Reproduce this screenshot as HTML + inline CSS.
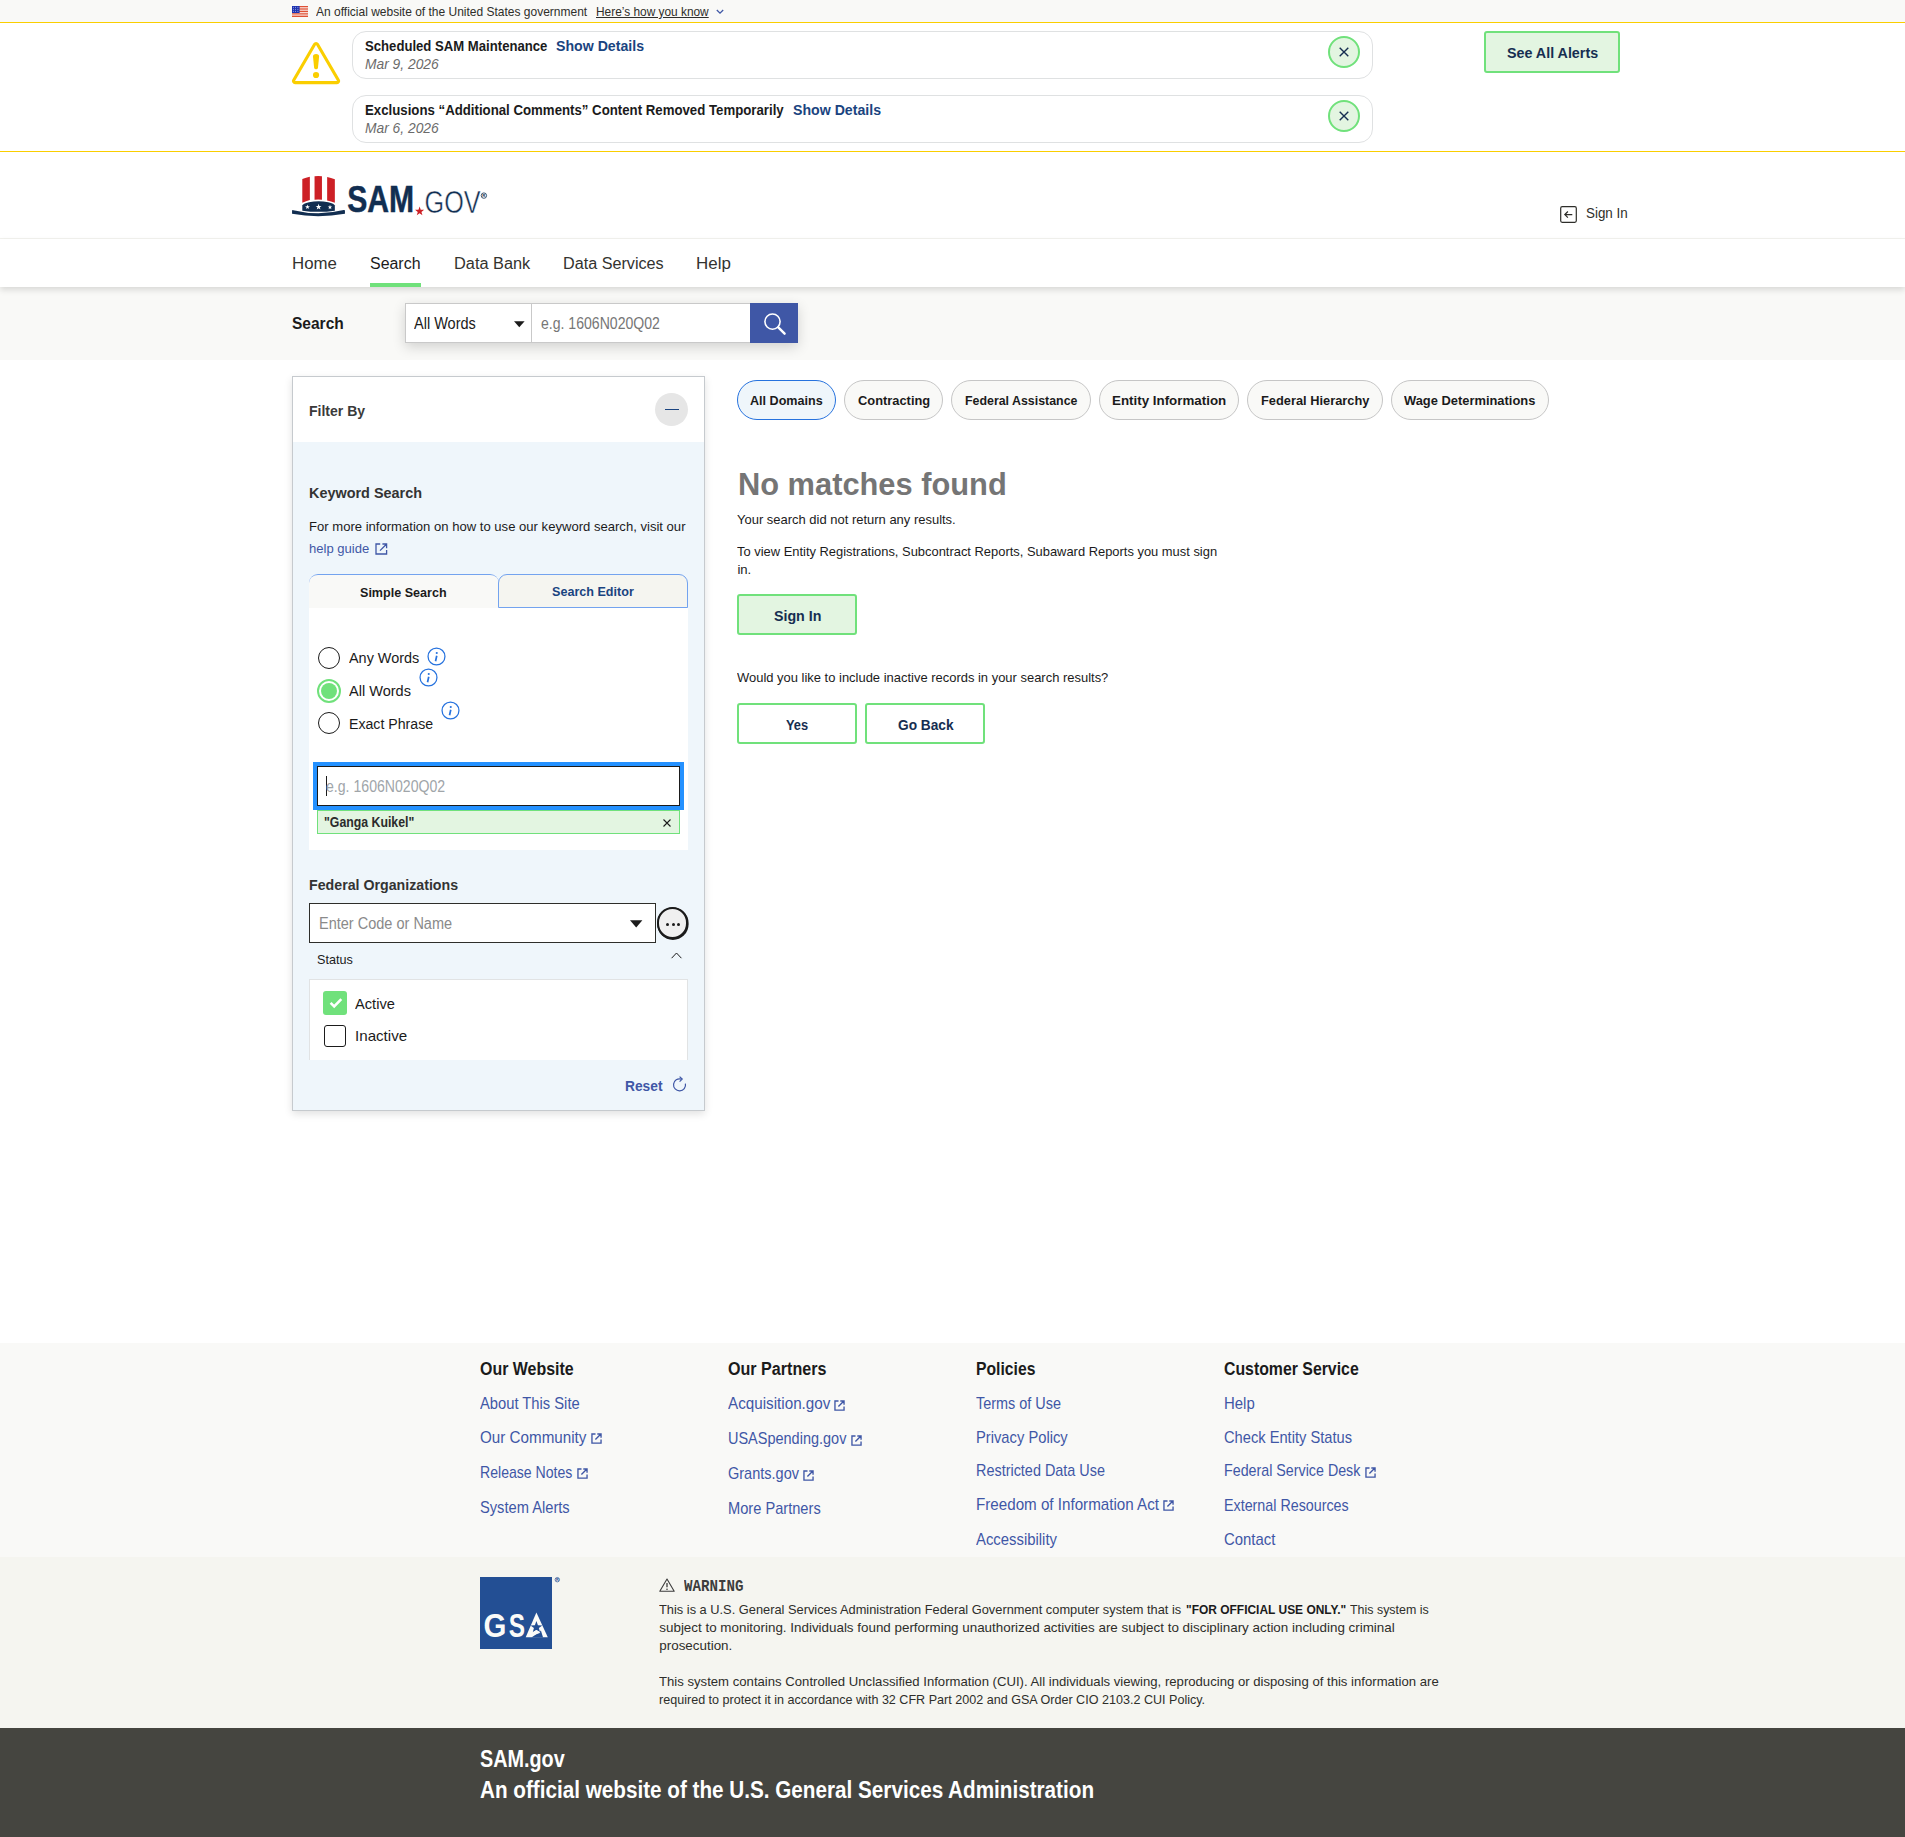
<!DOCTYPE html>
<html lang="en">
<head>
<meta charset="utf-8">
<title>SAM.gov | Search</title>
<style>
html,body{margin:0;padding:0;background:#fff;}
body{width:1905px;height:1837px;position:relative;overflow:hidden;font-family:"Liberation Sans",sans-serif;color:#1b1b1b;}
.a{position:absolute;box-sizing:border-box;}
.t{position:absolute;white-space:pre;line-height:1;transform-origin:0 0;}
svg{position:absolute;overflow:visible;}
.card{border:1px solid #dfe1e2;border-radius:14px;background:#fff;}
.xbtn{width:32px;height:32px;border-radius:50%;background:#e3f5e1;border:2px solid #70e17b;}
.gbtn{border:2px solid #70e17b;border-radius:3px;}
.pill{height:40px;top:380px;border-radius:20px;background:#f9f9f7;border:1px solid #c6c6c6;}
</style>
</head>
<body>
<!-- ===== gov banner ===== -->
<div class="a" style="left:0;top:0;width:1905px;height:22px;background:#f9f9f7;"></div>
<svg style="left:292px;top:6px" width="16" height="11" viewBox="0 0 16 11">
  <rect width="16" height="11" fill="#fff"/>
  <g fill="#db3e1f"><rect y="0" width="16" height="0.9"/><rect y="1.7" width="16" height="0.9"/><rect y="3.4" width="16" height="0.9"/><rect y="5.1" width="16" height="0.9"/><rect y="6.8" width="16" height="0.9"/><rect y="8.5" width="16" height="0.9"/><rect y="10.1" width="16" height="0.9"/></g>
  <rect width="7.6" height="7" fill="#1e33b1"/><circle cx="1.3" cy="1.2" r="0.45" fill="#fff"/><circle cx="3.6" cy="1.2" r="0.45" fill="#fff"/><circle cx="5.9" cy="1.2" r="0.45" fill="#fff"/><circle cx="1.3" cy="3.2" r="0.45" fill="#fff"/><circle cx="3.6" cy="3.2" r="0.45" fill="#fff"/><circle cx="5.9" cy="3.2" r="0.45" fill="#fff"/><circle cx="1.3" cy="5.2" r="0.45" fill="#fff"/><circle cx="3.6" cy="5.2" r="0.45" fill="#fff"/><circle cx="5.9" cy="5.2" r="0.45" fill="#fff"/>
</svg>
<svg style="left:716px;top:9px" width="8" height="6" viewBox="0 0 8 6"><path d="M0.8 1 L4 4.2 L7.2 1" fill="none" stroke="#3f57a6" stroke-width="1.3"/></svg>

<!-- ===== alerts ===== -->
<div class="a" style="left:0;top:22px;width:1905px;height:1px;background:#face00;"></div>
<div class="a" style="left:0;top:151px;width:1905px;height:1px;background:#face00;"></div>
<svg style="left:292px;top:41px" width="48" height="44" viewBox="0 0 48 44">
  <path d="M22.66 3.27 A1.6 1.6 0 0 1 25.42 3.27 L46.40 39.24 A1.6 1.6 0 0 1 45.01 41.65 L3.07 41.65 A1.6 1.6 0 0 1 1.68 39.24 Z" fill="none" stroke="#face00" stroke-width="3.1"/>
  <path d="M21 15.8 Q20.9 13 24.04 13 Q27.2 13 27.1 15.8 L26 26.4 Q25.8 28.3 24.04 28.3 Q22.3 28.3 22.1 26.4 Z" fill="#face00"/>
  <circle cx="24.04" cy="34" r="3.1" fill="#face00"/>
</svg>
<div class="a card" style="left:352px;top:31px;width:1021px;height:48px;"></div>
<div class="a card" style="left:352px;top:95px;width:1021px;height:48px;"></div>
<div class="a xbtn" style="left:1328px;top:36px;"></div>
<div class="a xbtn" style="left:1328px;top:100px;"></div>
<svg style="left:1339px;top:47px" width="10" height="10" viewBox="0 0 10 10"><path d="M0.7 0.7 L9.3 9.3 M9.3 0.7 L0.7 9.3" stroke="#162e51" stroke-width="1.4"/></svg>
<svg style="left:1339px;top:111px" width="10" height="10" viewBox="0 0 10 10"><path d="M0.7 0.7 L9.3 9.3 M9.3 0.7 L0.7 9.3" stroke="#162e51" stroke-width="1.4"/></svg>
<div class="a gbtn" style="left:1484px;top:31px;width:136px;height:42px;background:#e3f5e1;"></div>

<!-- ===== header ===== -->
<svg style="left:292px;top:176px" width="196" height="42" viewBox="0 0 196 42">
  <path d="M10.3 3.05 Q14 1.5 17.85 0.85 L17.85 23.9 Q14 24.9 10.3 26.75 Z" fill="#cd2026"/>
  <path d="M22.55 0.15 Q26.2 -0.15 29.95 0.15 L29.95 23.75 Q26.2 23.35 22.55 23.75 Z" fill="#cd2026"/>
  <path d="M35.15 1.0 Q39 1.7 42.85 3.2 L42.85 26.75 Q39 25.2 35.15 24.55 Z" fill="#cd2026"/>
  <path d="M10.3 29.6 Q10.8 27.6 17 26.2 Q26.6 24.3 36.2 26.2 Q42.4 27.6 42.85 29.6 L42.85 34.65 Q26.6 37.0 10.3 34.65 Z" fill="#112e51"/>
  <path d="M15.50 28.60 L16.09 30.29 L17.88 30.33 L16.45 31.41 L16.97 33.12 L15.50 32.10 L14.03 33.12 L14.55 31.41 L13.12 30.33 L14.91 30.29 Z" fill="#fff"/>
  <path d="M26.60 27.80 L27.33 29.90 L29.55 29.94 L27.78 31.28 L28.42 33.41 L26.60 32.14 L24.78 33.41 L25.42 31.28 L23.65 29.94 L25.87 29.90 Z" fill="#fff"/>
  <path d="M38.00 28.80 L38.56 30.42 L40.28 30.46 L38.91 31.50 L39.41 33.14 L38.00 32.16 L36.59 33.14 L37.09 31.50 L35.72 30.46 L37.44 30.42 Z" fill="#fff"/>
  <path d="M0.05 34.6 Q0.1 33.9 1.3 34.2 Q26.5 40.3 51.7 34.1 Q52.9 33.8 52.95 34.5 L52.95 37.75 Q26.5 42.6 0.05 37.85 Z" fill="#112e51"/>
  <text x="55.2" y="36.35" font-family="Liberation Sans, sans-serif" font-weight="700" font-size="36.6" fill="#112e51" stroke="#112e51" stroke-width="0.5" textLength="66.9" lengthAdjust="spacingAndGlyphs">SAM</text>
  <path d="M127.60 30.50 L128.73 33.75 L132.17 33.82 L129.43 35.89 L130.42 39.18 L127.60 37.22 L124.78 39.18 L125.77 35.89 L123.03 33.82 L126.47 33.75 Z" fill="#cd2026"/>
  <text x="132.6" y="36.5" font-family="Liberation Sans, sans-serif" font-weight="400" font-size="30.8" fill="#112e51" stroke="#fff" stroke-width="0.5" textLength="56" lengthAdjust="spacingAndGlyphs">GOV</text>
  <circle cx="191.9" cy="19.6" r="2.7" fill="none" stroke="#112e51" stroke-width="0.8"/>
  <text x="190.35" y="21.2" font-family="Liberation Sans, sans-serif" font-weight="700" font-size="4.4" fill="#112e51">R</text>
</svg>
<svg style="left:1560px;top:206px" width="17" height="17" viewBox="0 0 17 17">
  <rect x="0.7" y="0.7" width="15.6" height="15.6" rx="1.5" fill="none" stroke="#2e2e2a" stroke-width="1.2"/>
  <path d="M12.3 8.6 L4.8 8.6 M7.9 5.5 L4.8 8.6 L7.9 11.7" fill="none" stroke="#2e2e2a" stroke-width="1.2"/>
</svg>
<div class="a" style="left:0;top:238px;width:1905px;height:1px;background:#f3f3ef;"></div>

<!-- ===== nav + search bar ===== -->
<div class="a" style="left:0;top:287px;width:1905px;height:72.6px;background:#f9f9f7;"></div>
<div class="a" style="left:0;top:239px;width:1905px;height:48px;background:#fff;box-shadow:0 3px 6px rgba(0,0,0,.13);"></div>
<div class="a" style="left:370px;top:283px;width:51px;height:4px;background:#70e17b;"></div>
<div class="a" style="left:405px;top:303px;width:393px;height:40px;box-shadow:0 4px 12px rgba(0,0,0,.16);background:#fff;"></div>
<div class="a" style="left:405px;top:303px;width:127px;height:40px;border:1px solid #c9c9c9;background:#fff;"></div>
<div class="a" style="left:531px;top:303px;width:220px;height:40px;border:1px solid #c9c9c9;background:#fff;"></div>
<svg style="left:514px;top:321px" width="11" height="7" viewBox="0 0 11 7"><path d="M0 0.3 L10.6 0.3 L5.3 6.3 Z" fill="#1b1b1b"/></svg>
<div class="a" style="left:750px;top:303px;width:48px;height:40px;background:#3f57a6;"></div>
<svg style="left:762px;top:311px" width="26" height="26" viewBox="0 0 26 26">
  <circle cx="10.5" cy="10.6" r="7.6" fill="none" stroke="#fff" stroke-width="1.6"/>
  <path d="M16.3 16.4 L22.6 22.7" stroke="#fff" stroke-width="2.4" stroke-linecap="round"/>
</svg>

<!-- ===== filter panel ===== -->
<div class="a" style="left:292px;top:376px;width:413px;height:735px;border:1px solid #c6cace;background:#eff6fb;box-shadow:0 3px 8px rgba(0,0,0,.12);"></div>
<div class="a" style="left:293px;top:377px;width:411px;height:65px;background:#fff;"></div>
<div class="a" style="left:655px;top:393px;width:33px;height:33px;border-radius:50%;background:#e6e6e6;"></div>
<div class="a" style="left:665px;top:409px;width:14px;height:1px;background:#1a4480;"></div>
<!-- ext icon after help guide -->
<svg style="left:374.5px;top:542.5px" width="13" height="12" viewBox="0 0 13 12"><path d="M5.2 1 H1 V11 H11.6 V7 M7.4 1 H11.6 V5.2 M11.4 1.2 L5 7.6" fill="none" stroke="#3f57a6" stroke-width="1.3"/></svg>
<!-- tabs -->
<div class="a" style="left:309px;top:574px;width:190px;height:34px;background:#f9f9f7;border-top:1px solid #73a3ef;border-radius:9px 9px 0 0;"></div>
<div class="a" style="left:498px;top:574px;width:190px;height:34px;background:#f5f5f0;border:1px solid #73a3ef;border-radius:9px 9px 0 0;"></div>
<div class="a" style="left:309px;top:608px;width:379px;height:242px;background:#fff;"></div>
<!-- radios -->
<div class="a" style="left:318px;top:647px;width:22px;height:22px;border-radius:50%;border:1.5px solid #1b1b1b;background:#fff;"></div>
<div class="a" style="left:317px;top:679px;width:24px;height:24px;border-radius:50%;border:2px solid #70e17b;background:#fff;"></div>
<div class="a" style="left:321px;top:683px;width:16px;height:16px;border-radius:50%;background:#70e17b;"></div>
<div class="a" style="left:318px;top:712px;width:22px;height:22px;border-radius:50%;border:1.5px solid #1b1b1b;background:#fff;"></div>
<!-- info icons -->
<svg style="left:427px;top:647px" width="19" height="19" viewBox="0 0 19 19"><circle cx="9.5" cy="9.5" r="8.45" fill="none" stroke="#2672de" stroke-width="1.25"/><circle cx="9.75" cy="6.0" r="1.05" fill="#2672de"/><path d="M9.75 8.7 L8.55 14.2" stroke="#2672de" stroke-width="1.7" fill="none"/></svg>
<svg style="left:418.5px;top:668px" width="19" height="19" viewBox="0 0 19 19"><circle cx="9.5" cy="9.5" r="8.45" fill="none" stroke="#2672de" stroke-width="1.25"/><circle cx="9.75" cy="6.0" r="1.05" fill="#2672de"/><path d="M9.75 8.7 L8.55 14.2" stroke="#2672de" stroke-width="1.7" fill="none"/></svg>
<svg style="left:440.7px;top:701px" width="19" height="19" viewBox="0 0 19 19"><circle cx="9.5" cy="9.5" r="8.45" fill="none" stroke="#2672de" stroke-width="1.25"/><circle cx="9.75" cy="6.0" r="1.05" fill="#2672de"/><path d="M9.75 8.7 L8.55 14.2" stroke="#2672de" stroke-width="1.7" fill="none"/></svg>
<!-- focused input -->
<div class="a" style="left:313px;top:762px;width:371px;height:48px;background:#2491ff;"></div>
<div class="a" style="left:317px;top:766px;width:363px;height:40px;background:#fff;border:1px solid #1b1b1b;"></div>
<div class="a" style="left:326px;top:776px;width:1px;height:20px;background:#1b1b1b;"></div>
<!-- chip -->
<div class="a" style="left:317px;top:810px;width:363px;height:24px;background:#e3f5e1;border:1px solid #70e17b;"></div>
<svg style="left:663px;top:819px" width="8" height="8" viewBox="0 0 8 8"><path d="M0.5 0.5 L7.5 7.5 M7.5 0.5 L0.5 7.5" stroke="#1b1b1b" stroke-width="1.1"/></svg>
<!-- fed org -->
<div class="a" style="left:309px;top:903px;width:347px;height:40px;background:#fff;border:1px solid #2e2e2a;"></div>
<svg style="left:630px;top:919.5px" width="13" height="8" viewBox="0 0 13 8"><path d="M0 0.2 L12.4 0.2 L6.2 7.4 Z" fill="#1b1b1b"/></svg>
<div class="a" style="left:656.5px;top:907px;width:31.5px;height:31.5px;border-radius:50%;background:#f0f0f0;border:2px solid #1b1b1b;box-shadow:0.4px 0.7px 0 0.2px #1b1b1b;"></div>
<div class="a" style="left:666px;top:922.5px;width:3px;height:3px;border-radius:50%;background:#1b1b1b;"></div>
<div class="a" style="left:671.5px;top:922.5px;width:3px;height:3px;border-radius:50%;background:#1b1b1b;"></div>
<div class="a" style="left:677px;top:922.5px;width:3px;height:3px;border-radius:50%;background:#1b1b1b;"></div>
<!-- status -->
<svg style="left:671px;top:952px" width="11" height="7" viewBox="0 0 11 7"><path d="M0.6 6.2 L5.5 1 L10.4 6.2" fill="none" stroke="#1b1b1b" stroke-width="1"/></svg>
<div class="a" style="left:309px;top:979px;width:379px;height:81px;background:#fff;border:1px solid #e1e3e4;border-bottom:none;"></div>
<div class="a" style="left:323px;top:991px;width:24px;height:24px;border-radius:3px;background:#70e17b;"></div>
<svg style="left:328.5px;top:997px" width="14" height="12" viewBox="0 0 14 12"><path d="M1.6 5.8 L5.2 9.4 L12.3 2.2" fill="none" stroke="#fff" stroke-width="2.6"/></svg>
<div class="a" style="left:324px;top:1025px;width:22px;height:22px;border-radius:3px;background:#fff;border:1.5px solid #1b1b1b;"></div>
<!-- reset icon -->
<svg style="left:672px;top:1076px" width="15" height="16" viewBox="0 0 15 16"><path d="M9.2 3.1 A6 6 0 1 0 13.4 7.6" fill="none" stroke="#3f57a6" stroke-width="1.2"/><path d="M7.6 0.6 L10.2 3.1 L7.6 5.6" fill="none" stroke="#3f57a6" stroke-width="1.2"/></svg>

<!-- ===== pills ===== -->
<div class="a pill" style="left:737px;width:99px;background:#eff6fb;border-color:#2672de;"></div>
<div class="a pill" style="left:844px;width:99px;"></div>
<div class="a pill" style="left:951px;width:140px;"></div>
<div class="a pill" style="left:1099px;width:140px;"></div>
<div class="a pill" style="left:1247px;width:136px;"></div>
<div class="a pill" style="left:1391px;width:158px;"></div>
<!-- buttons -->
<div class="a gbtn" style="left:737px;top:594.2px;width:120px;height:41.3px;background:#e3f5e1;"></div>
<div class="a gbtn" style="left:737px;top:703.3px;width:120px;height:41px;background:#fff;"></div>
<div class="a gbtn" style="left:865.2px;top:703.3px;width:119.8px;height:41px;background:#fff;"></div>

<!-- ===== footer ===== -->
<div class="a" style="left:0;top:1343px;width:1905px;height:214px;background:#f9f9f7;"></div>
<div class="a" style="left:0;top:1557px;width:1905px;height:171px;background:#f5f5f0;"></div>
<div class="a" style="left:0;top:1728px;width:1905px;height:109px;background:#454540;"></div>
<!-- GSA logo -->
<div class="a" style="left:480px;top:1577px;width:72px;height:72px;background:#234f94;"></div>
<svg style="left:480px;top:1577px" width="82" height="72" viewBox="0 0 82 72">
  <text x="3.6" y="59.9" font-family="Liberation Sans, sans-serif" font-weight="700" font-size="33" fill="#fbfbf8" textLength="22.9" lengthAdjust="spacingAndGlyphs">G</text>
  <text x="28.8" y="59.9" font-family="Liberation Sans, sans-serif" font-weight="700" font-size="33" fill="#fbfbf8" textLength="16.3" lengthAdjust="spacingAndGlyphs">S</text>
  <path d="M56.4 35.6 L67.8 60.3 L45.7 60.3 Z" fill="#fbfbf8"/>
  <path d="M56.40 44.10 L57.93 48.20 L62.30 48.38 L58.87 51.10 L60.04 55.32 L56.40 52.90 L52.76 55.32 L53.93 51.10 L50.50 48.38 L54.87 48.20 Z" fill="#234f94"/>
  <path d="M51.4 60.38 L59.3 55.3 L60.9 53.4 L63.1 60.38 Z" fill="#234f94"/>
  <path d="M52.2 55.6 L56.4 52.9 L60.2 55.2 L59.3 56.3 L52.9 58.3 Z" fill="#fbfbf8"/>
  <circle cx="77.3" cy="2.7" r="2.2" fill="none" stroke="#234f94" stroke-width="0.7"/>
  <text x="76.0" y="4.1" font-family="Liberation Sans, sans-serif" font-weight="700" font-size="3.8" fill="#234f94">R</text>
</svg>
<!-- warning icon -->
<svg style="left:659px;top:1578px" width="16" height="14" viewBox="0 0 16 14"><path d="M8 1 L15.2 13.2 L0.8 13.2 Z" fill="none" stroke="#3d3d3d" stroke-width="1.1" stroke-linejoin="round"/><path d="M8 5 L8 9.3" stroke="#3d3d3d" stroke-width="1.3"/><circle cx="8" cy="11.2" r="0.8" fill="#3d3d3d"/></svg>
<svg style="left:590.7px;top:1432.7px" width="11" height="11" viewBox="0 0 11 11"><path d="M4.5 0.95 H0.95 V10.05 H10.05 V6.5 M6.3 0.95 H10.05 V4.7 M9.9 1.1 L4.4 6.6" fill="none" stroke="#3f57a6" stroke-width="1.35"/></svg>
<svg style="left:576.7px;top:1468.0px" width="11" height="11" viewBox="0 0 11 11"><path d="M4.5 0.95 H0.95 V10.05 H10.05 V6.5 M6.3 0.95 H10.05 V4.7 M9.9 1.1 L4.4 6.6" fill="none" stroke="#3f57a6" stroke-width="1.35"/></svg>
<svg style="left:834.3px;top:1399.8px" width="11" height="11" viewBox="0 0 11 11"><path d="M4.5 0.95 H0.95 V10.05 H10.05 V6.5 M6.3 0.95 H10.05 V4.7 M9.9 1.1 L4.4 6.6" fill="none" stroke="#3f57a6" stroke-width="1.35"/></svg>
<svg style="left:850.8px;top:1434.7px" width="11" height="11" viewBox="0 0 11 11"><path d="M4.5 0.95 H0.95 V10.05 H10.05 V6.5 M6.3 0.95 H10.05 V4.7 M9.9 1.1 L4.4 6.6" fill="none" stroke="#3f57a6" stroke-width="1.35"/></svg>
<svg style="left:803.3px;top:1469.7px" width="11" height="11" viewBox="0 0 11 11"><path d="M4.5 0.95 H0.95 V10.05 H10.05 V6.5 M6.3 0.95 H10.05 V4.7 M9.9 1.1 L4.4 6.6" fill="none" stroke="#3f57a6" stroke-width="1.35"/></svg>
<svg style="left:1162.9px;top:1500.3px" width="11" height="11" viewBox="0 0 11 11"><path d="M4.5 0.95 H0.95 V10.05 H10.05 V6.5 M6.3 0.95 H10.05 V4.7 M9.9 1.1 L4.4 6.6" fill="none" stroke="#3f57a6" stroke-width="1.35"/></svg>
<svg style="left:1364.7px;top:1466.8px" width="11" height="11" viewBox="0 0 11 11"><path d="M4.5 0.95 H0.95 V10.05 H10.05 V6.5 M6.3 0.95 H10.05 V4.7 M9.9 1.1 L4.4 6.6" fill="none" stroke="#3f57a6" stroke-width="1.35"/></svg>

<span class="t" style="font-size:12.4px;font-weight:400;left:316.1px;top:6.0px;color:#2e2e2a;transform:scaleX(0.9682);">An official website of the United States government</span>
<span class="t" style="font-size:12.4px;font-weight:400;left:595.6px;top:6.0px;color:#2e2e2a;text-decoration:underline;transform:scaleX(0.9588);">Here’s how you know</span>
<span class="t" style="font-size:15px;font-weight:700;left:365.3px;top:38.0px;color:#1b1b1b;transform:scaleX(0.8753);">Scheduled SAM Maintenance</span>
<span class="t" style="font-size:15px;font-weight:700;left:556.3px;top:38.0px;color:#1a4480;transform:scaleX(0.9426);">Show Details</span>
<span class="t" style="font-size:15px;font-weight:400;font-style:italic;left:365.3px;top:56.0px;color:#6b6b6b;transform:scaleX(0.9207);">Mar 9, 2026</span>
<span class="t" style="font-size:15px;font-weight:700;left:365.3px;top:102.0px;color:#1b1b1b;transform:scaleX(0.8819);">Exclusions “Additional Comments” Content Removed Temporarily</span>
<span class="t" style="font-size:15px;font-weight:700;left:792.7px;top:102.0px;color:#1a4480;transform:scaleX(0.9426);">Show Details</span>
<span class="t" style="font-size:15px;font-weight:400;font-style:italic;left:365.3px;top:120.0px;color:#6b6b6b;transform:scaleX(0.9207);">Mar 6, 2026</span>
<span class="t" style="font-size:15.5px;font-weight:700;left:1506.8px;top:45.0px;color:#162e51;transform:scaleX(0.9221);">See All Alerts</span>
<span class="t" style="font-size:15px;font-weight:400;left:1586.0px;top:205.0px;color:#2e2e2a;transform:scaleX(0.8907);">Sign In</span>
<span class="t" style="font-size:17.3px;font-weight:400;left:292.4px;top:255.0px;color:#33332f;transform:scaleX(0.9738);">Home</span>
<span class="t" style="font-size:17.3px;font-weight:400;left:370.2px;top:255.0px;color:#1b1b1b;transform:scaleX(0.9221);">Search</span>
<span class="t" style="font-size:17.3px;font-weight:400;left:453.9px;top:255.0px;color:#33332f;transform:scaleX(0.9454);">Data Bank</span>
<span class="t" style="font-size:17.3px;font-weight:400;left:562.7px;top:255.0px;color:#33332f;transform:scaleX(0.9361);">Data Services</span>
<span class="t" style="font-size:17.3px;font-weight:400;left:696.0px;top:255.0px;color:#33332f;transform:scaleX(0.9790);">Help</span>
<span class="t" style="font-size:17.3px;font-weight:700;left:292.4px;top:315.0px;color:#1b1b1b;transform:scaleX(0.8984);">Search</span>
<span class="t" style="font-size:16.2px;font-weight:400;left:414.2px;top:315.0px;color:#1b1b1b;transform:scaleX(0.8961);">All Words</span>
<span class="t" style="font-size:16.2px;font-weight:400;left:540.5px;top:315.0px;color:#767676;transform:scaleX(0.8691);">e.g. 1606N020Q02</span>
<span class="t" style="font-size:15.4px;font-weight:700;left:309.4px;top:403.0px;color:#3a3a3a;transform:scaleX(0.9110);">Filter By</span>
<span class="t" style="font-size:15.4px;font-weight:700;left:309.4px;top:485.0px;color:#333333;transform:scaleX(0.9369);">Keyword Search</span>
<span class="t" style="font-size:13.5px;font-weight:400;left:309.3px;top:520.0px;color:#1b1b1b;transform:scaleX(0.9687);">For more information on how to use our keyword search, visit our</span>
<span class="t" style="font-size:13.5px;font-weight:400;left:309.3px;top:542.0px;color:#3f57a6;transform:scaleX(0.9677);">help guide</span>
<span class="t" style="font-size:13.3px;font-weight:700;left:359.9px;top:586.0px;color:#1b1b1b;transform:scaleX(0.9448);">Simple Search</span>
<span class="t" style="font-size:13.3px;font-weight:700;left:552.0px;top:585.0px;color:#1a4480;transform:scaleX(0.9460);">Search Editor</span>
<span class="t" style="font-size:15.4px;font-weight:400;left:349.0px;top:650.0px;color:#1b1b1b;transform:scaleX(0.9375);">Any Words</span>
<span class="t" style="font-size:15.4px;font-weight:400;left:349.0px;top:683.0px;color:#1b1b1b;transform:scaleX(0.9454);">All Words</span>
<span class="t" style="font-size:15.4px;font-weight:400;left:349.0px;top:716.0px;color:#1b1b1b;transform:scaleX(0.9187);">Exact Phrase</span>
<span class="t" style="font-size:15.6px;font-weight:400;left:326.2px;top:779.0px;color:#a0a5a9;transform:scaleX(0.9044);">e.g. 1606N020Q02</span>
<span class="t" style="font-size:14px;font-weight:700;left:323.5px;top:815.0px;color:#2b2b2b;transform:scaleX(0.8788);">"Ganga Kuikel"</span>
<span class="t" style="font-size:15.2px;font-weight:700;left:309.4px;top:877.0px;color:#333333;transform:scaleX(0.9347);">Federal Organizations</span>
<span class="t" style="font-size:15.6px;font-weight:400;left:318.5px;top:916.0px;color:#8a8a8a;transform:scaleX(0.9307);">Enter Code or Name</span>
<span class="t" style="font-size:13.3px;font-weight:400;left:317.4px;top:953.0px;color:#1b1b1b;transform:scaleX(0.9495);">Status</span>
<span class="t" style="font-size:15px;font-weight:400;left:355.1px;top:996.0px;color:#1b1b1b;transform:scaleX(0.9765);">Active</span>
<span class="t" style="font-size:15px;font-weight:400;left:355.1px;top:1028.0px;color:#1b1b1b;transform:scaleX(1.0096);">Inactive</span>
<span class="t" style="font-size:15px;font-weight:700;left:625.0px;top:1078.0px;color:#3f57a6;transform:scaleX(0.9178);">Reset</span>
<span class="t" style="font-size:13.5px;font-weight:700;left:750.2px;top:394.0px;color:#1b1b1b;transform:scaleX(0.9319);">All Domains</span>
<span class="t" style="font-size:13.5px;font-weight:700;left:857.7px;top:394.0px;color:#1b1b1b;transform:scaleX(0.9531);">Contracting</span>
<span class="t" style="font-size:13.5px;font-weight:700;left:964.7px;top:394.0px;color:#1b1b1b;transform:scaleX(0.9171);">Federal Assistance</span>
<span class="t" style="font-size:13.5px;font-weight:700;left:1111.9px;top:394.0px;color:#1b1b1b;transform:scaleX(0.9887);">Entity Information</span>
<span class="t" style="font-size:13.5px;font-weight:700;left:1260.8px;top:394.0px;color:#1b1b1b;transform:scaleX(0.9504);">Federal Hierarchy</span>
<span class="t" style="font-size:13.5px;font-weight:700;left:1404.0px;top:394.0px;color:#1b1b1b;transform:scaleX(0.9547);">Wage Determinations</span>
<span class="t" style="font-size:31px;font-weight:700;left:738.2px;top:469.0px;color:#757575;transform:scaleX(0.9937);">No matches found</span>
<span class="t" style="font-size:13.1px;font-weight:400;left:737.4px;top:513.0px;color:#1b1b1b;transform:scaleX(0.9906);">Your search did not return any results.</span>
<span class="t" style="font-size:13.1px;font-weight:400;left:737.4px;top:545.0px;color:#1b1b1b;transform:scaleX(0.9861);">To view Entity Registrations, Subcontract Reports, Subaward Reports you must sign</span>
<span class="t" style="font-size:13.1px;font-weight:400;left:737.4px;top:563.0px;color:#1b1b1b;">in.</span>
<span class="t" style="font-size:15px;font-weight:700;left:773.7px;top:608.0px;color:#162e51;transform:scaleX(0.9480);">Sign In</span>
<span class="t" style="font-size:13.1px;font-weight:400;left:737.4px;top:671.0px;color:#1b1b1b;transform:scaleX(0.9894);">Would you like to include inactive records in your search results?</span>
<span class="t" style="font-size:15px;font-weight:700;left:786.3px;top:717.0px;color:#162e51;transform:scaleX(0.8580);">Yes</span>
<span class="t" style="font-size:15px;font-weight:700;left:897.5px;top:717.0px;color:#162e51;transform:scaleX(0.9136);">Go Back</span>
<span class="t" style="font-size:17.6px;font-weight:700;left:480.3px;top:1361.0px;color:#1b1b1b;transform:scaleX(0.9070);">Our Website</span>
<span class="t" style="font-size:17.6px;font-weight:700;left:728.3px;top:1361.0px;color:#1b1b1b;transform:scaleX(0.9148);">Our Partners</span>
<span class="t" style="font-size:17.6px;font-weight:700;left:976.3px;top:1361.0px;color:#1b1b1b;transform:scaleX(0.8930);">Policies</span>
<span class="t" style="font-size:17.6px;font-weight:700;left:1224.3px;top:1361.0px;color:#1b1b1b;transform:scaleX(0.9003);">Customer Service</span>
<span class="t" style="font-size:15.9px;font-weight:400;left:480.3px;top:1396.0px;color:#3f57a6;transform:scaleX(0.9276);">About This Site</span>
<span class="t" style="font-size:15.9px;font-weight:400;left:480.3px;top:1430.0px;color:#3f57a6;transform:scaleX(0.9563);">Our Community</span>
<span class="t" style="font-size:15.9px;font-weight:400;left:480.3px;top:1465.0px;color:#3f57a6;transform:scaleX(0.8865);">Release Notes</span>
<span class="t" style="font-size:15.9px;font-weight:400;left:480.3px;top:1500.0px;color:#3f57a6;transform:scaleX(0.9234);">System Alerts</span>
<span class="t" style="font-size:15.9px;font-weight:400;left:728.3px;top:1396.0px;color:#3f57a6;transform:scaleX(0.9580);">Acquisition.gov</span>
<span class="t" style="font-size:15.9px;font-weight:400;left:728.3px;top:1431.0px;color:#3f57a6;transform:scaleX(0.9116);">USASpending.gov</span>
<span class="t" style="font-size:15.9px;font-weight:400;left:728.3px;top:1466.0px;color:#3f57a6;transform:scaleX(0.9134);">Grants.gov</span>
<span class="t" style="font-size:15.9px;font-weight:400;left:728.3px;top:1501.0px;color:#3f57a6;transform:scaleX(0.9207);">More Partners</span>
<span class="t" style="font-size:15.9px;font-weight:400;left:976.3px;top:1396.0px;color:#3f57a6;transform:scaleX(0.9080);">Terms of Use</span>
<span class="t" style="font-size:15.9px;font-weight:400;left:976.3px;top:1430.0px;color:#3f57a6;transform:scaleX(0.9271);">Privacy Policy</span>
<span class="t" style="font-size:15.9px;font-weight:400;left:976.3px;top:1463.0px;color:#3f57a6;transform:scaleX(0.9073);">Restricted Data Use</span>
<span class="t" style="font-size:15.9px;font-weight:400;left:976.3px;top:1497.0px;color:#3f57a6;transform:scaleX(0.9548);">Freedom of Information Act</span>
<span class="t" style="font-size:15.9px;font-weight:400;left:976.3px;top:1532.0px;color:#3f57a6;transform:scaleX(0.9359);">Accessibility</span>
<span class="t" style="font-size:15.9px;font-weight:400;left:1224.3px;top:1396.0px;color:#3f57a6;transform:scaleX(0.9392);">Help</span>
<span class="t" style="font-size:15.9px;font-weight:400;left:1224.3px;top:1430.0px;color:#3f57a6;transform:scaleX(0.9230);">Check Entity Status</span>
<span class="t" style="font-size:15.9px;font-weight:400;left:1224.3px;top:1463.0px;color:#3f57a6;transform:scaleX(0.8979);">Federal Service Desk</span>
<span class="t" style="font-size:15.9px;font-weight:400;left:1224.3px;top:1498.0px;color:#3f57a6;transform:scaleX(0.8992);">External Resources</span>
<span class="t" style="font-size:15.9px;font-weight:400;left:1224.3px;top:1532.0px;color:#3f57a6;transform:scaleX(0.9385);">Contact</span>
<span class="t" style="font-size:16.6px;font-weight:700;font-family:'Liberation Mono', monospace;left:683.5px;top:1579.0px;color:#3d3d3d;transform:scaleX(0.8549);">WARNING</span>
<span class="t" style="font-size:13.4px;font-weight:400;left:659.3px;top:1603.0px;color:#2e2e2a;transform:scaleX(0.9573);">This is a U.S. General Services Administration Federal Government computer system that is</span>
<span class="t" style="font-size:13.4px;font-weight:700;left:1185.5px;top:1603.0px;color:#1b1b1b;transform:scaleX(0.8932);">"FOR OFFICIAL USE ONLY."</span>
<span class="t" style="font-size:13.4px;font-weight:400;left:1350.0px;top:1603.0px;color:#2e2e2a;transform:scaleX(0.9278);">This system is</span>
<span class="t" style="font-size:13.4px;font-weight:400;left:659.3px;top:1621.0px;color:#2e2e2a;">subject to monitoring. Individuals found performing unauthorized activities are subject to disciplinary action including criminal</span>
<span class="t" style="font-size:13.4px;font-weight:400;left:659.3px;top:1639.0px;color:#2e2e2a;">prosecution.</span>
<span class="t" style="font-size:13.4px;font-weight:400;left:659.3px;top:1675.0px;color:#2e2e2a;transform:scaleX(0.9809);">This system contains Controlled Unclassified Information (CUI). All individuals viewing, reproducing or disposing of this information are</span>
<span class="t" style="font-size:13.4px;font-weight:400;left:659.3px;top:1693.0px;color:#2e2e2a;transform:scaleX(0.9387);">required to protect it in accordance with 32 CFR Part 2002 and GSA Order CIO 2103.2 CUI Policy.</span>
<span class="t" style="font-size:23px;font-weight:700;left:480.3px;top:1748.0px;color:#ffffff;transform:scaleX(0.8609);">SAM.gov</span>
<span class="t" style="font-size:23px;font-weight:700;left:480.3px;top:1779.0px;color:#ffffff;transform:scaleX(0.8991);">An official website of the U.S. General Services Administration</span>
</body>
</html>
